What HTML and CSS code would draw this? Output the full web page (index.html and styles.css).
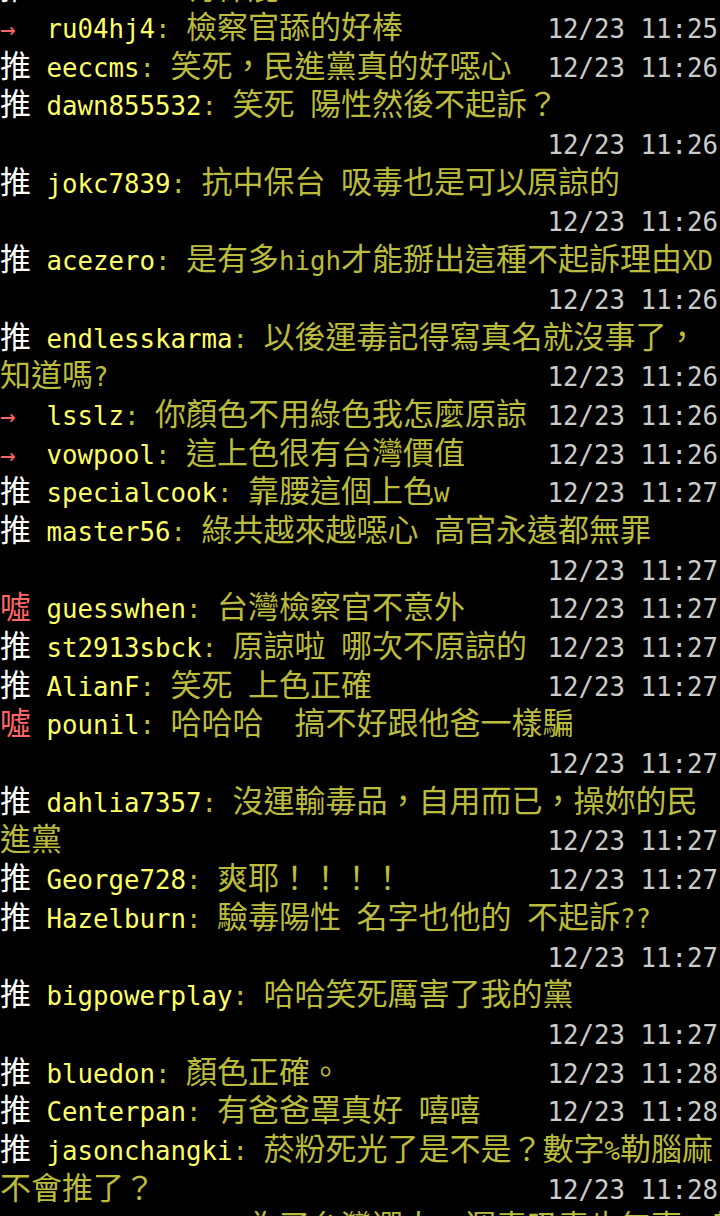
FILE: index.html
```html
<!DOCTYPE html>
<html lang="zh-Hant">
<head>
    <meta charset="UTF-8">
    <title>PTT 推文</title>
    <link rel="stylesheet" href="styles.css">
</head>
<body>

<div class="scr">
<div class="ln"><span class="l"><span class="mk c">推</span> <span class="id">wenhsin</span><span class="tx">: <span class="c">有保庇</span></span></span></div>
<div class="ln"><span class="l"><span class="mk boo">→</span> <span class="id">ru04hj4</span><span class="tx">: <span class="c">檢察官舔的好棒</span></span></span><span class="tm">12/23 11:25</span></div>
<div class="ln"><span class="l"><span class="mk c">推</span> <span class="id">eeccms</span><span class="tx">: <span class="c">笑死，民進黨真的好噁心</span></span></span><span class="tm">12/23 11:26</span></div>
<div class="ln"><span class="l"><span class="mk c">推</span> <span class="id">dawn855532</span><span class="tx">: <span class="c">笑死</span> <span class="c">陽性然後不起訴？</span></span></span></div>
<div class="ln"><span class="l"></span><span class="tm">12/23 11:26</span></div>
<div class="ln"><span class="l"><span class="mk c">推</span> <span class="id">jokc7839</span><span class="tx">: <span class="c">抗中保台</span> <span class="c">吸毒也是可以原諒的</span></span></span></div>
<div class="ln"><span class="l"></span><span class="tm">12/23 11:26</span></div>
<div class="ln"><span class="l"><span class="mk c">推</span> <span class="id">acezero</span><span class="tx">: <span class="c">是有多</span>high<span class="c">才能掰出這種不起訴理由</span>XD</span></span></div>
<div class="ln"><span class="l"></span><span class="tm">12/23 11:26</span></div>
<div class="ln"><span class="l"><span class="mk c">推</span> <span class="id">endlesskarma</span><span class="tx">: <span class="c">以後運毒記得寫真名就沒事了，</span></span></span></div>
<div class="ln"><span class="l"><span class="tx"><span class="c">知道嗎</span>?</span></span><span class="tm">12/23 11:26</span></div>
<div class="ln"><span class="l"><span class="mk boo">→</span> <span class="id">lsslz</span><span class="tx">: <span class="c">你顏色不用綠色我怎麼原諒</span></span></span><span class="tm">12/23 11:26</span></div>
<div class="ln"><span class="l"><span class="mk boo">→</span> <span class="id">vowpool</span><span class="tx">: <span class="c">這上色很有台灣價值</span></span></span><span class="tm">12/23 11:26</span></div>
<div class="ln"><span class="l"><span class="mk c">推</span> <span class="id">specialcook</span><span class="tx">: <span class="c">靠腰這個上色</span>w</span></span><span class="tm">12/23 11:27</span></div>
<div class="ln"><span class="l"><span class="mk c">推</span> <span class="id">master56</span><span class="tx">: <span class="c">綠共越來越噁心</span> <span class="c">高官永遠都無罪</span></span></span></div>
<div class="ln"><span class="l"></span><span class="tm">12/23 11:27</span></div>
<div class="ln"><span class="l"><span class="mk c boo">噓</span> <span class="id">guesswhen</span><span class="tx">: <span class="c">台灣檢察官不意外</span></span></span><span class="tm">12/23 11:27</span></div>
<div class="ln"><span class="l"><span class="mk c">推</span> <span class="id">st2913sbck</span><span class="tx">: <span class="c">原諒啦</span> <span class="c">哪次不原諒的</span></span></span><span class="tm">12/23 11:27</span></div>
<div class="ln"><span class="l"><span class="mk c">推</span> <span class="id">AlianF</span><span class="tx">: <span class="c">笑死</span> <span class="c">上色正確</span></span></span><span class="tm">12/23 11:27</span></div>
<div class="ln"><span class="l"><span class="mk c boo">噓</span> <span class="id">pounil</span><span class="tx">: <span class="c">哈哈哈</span>  <span class="c">搞不好跟他爸一樣騙</span></span></span></div>
<div class="ln"><span class="l"></span><span class="tm">12/23 11:27</span></div>
<div class="ln"><span class="l"><span class="mk c">推</span> <span class="id">dahlia7357</span><span class="tx">: <span class="c">沒運輸毒品，自用而已，操妳的民</span></span></span></div>
<div class="ln"><span class="l"><span class="tx"><span class="c">進黨</span></span></span><span class="tm">12/23 11:27</span></div>
<div class="ln"><span class="l"><span class="mk c">推</span> <span class="id">George728</span><span class="tx">: <span class="c">爽耶！！！！</span></span></span><span class="tm">12/23 11:27</span></div>
<div class="ln"><span class="l"><span class="mk c">推</span> <span class="id">Hazelburn</span><span class="tx">: <span class="c">驗毒陽性</span> <span class="c">名字也他的</span> <span class="c">不起訴</span>??</span></span></div>
<div class="ln"><span class="l"></span><span class="tm">12/23 11:27</span></div>
<div class="ln"><span class="l"><span class="mk c">推</span> <span class="id">bigpowerplay</span><span class="tx">: <span class="c">哈哈笑死厲害了我的黨</span></span></span></div>
<div class="ln"><span class="l"></span><span class="tm">12/23 11:27</span></div>
<div class="ln"><span class="l"><span class="mk c">推</span> <span class="id">bluedon</span><span class="tx">: <span class="c">顏色正確。</span></span></span><span class="tm">12/23 11:28</span></div>
<div class="ln"><span class="l"><span class="mk c">推</span> <span class="id">Centerpan</span><span class="tx">: <span class="c">有爸爸罩真好</span> <span class="c">嘻嘻</span></span></span><span class="tm">12/23 11:28</span></div>
<div class="ln"><span class="l"><span class="mk c">推</span> <span class="id">jasonchangki</span><span class="tx">: <span class="c">菸粉死光了是不是？數字</span>%<span class="c">勒腦麻</span></span></span></div>
<div class="ln"><span class="l"><span class="tx"><span class="c">不會推了？</span></span></span><span class="tm">12/23 11:28</span></div>
<div class="ln"><span class="l"><span class="mk boo">→</span> <span class="id">snowcoverer</span><span class="tx">: <span class="c">為了台灣選人，運毒吸毒也無事，輸</span></span></span></div>
</div>

</body>
</html>
```

FILE: styles.css
```css
* {
    margin: 0;
    padding: 0;
}

html, body {
    background: #000;
    height: 100%;
    overflow: hidden;
}

.scr {
    margin-top: -28.65px;
    font-family: "DejaVu Sans Mono", "Noto Sans CJK TC", monospace;
    font-size: 25.75px;
    color: #fff;
}

.ln {
    display: flex;
    height: 38.7px;
    line-height: 38.7px;
    white-space: pre;
    padding-right: 2px;
}

.l {
    flex: 1;
}

/* cjk runs take two mono cells */
.c {
    font-family: "Noto Sans CJK TC", sans-serif;
    font-size: 31px;
    line-height: 20px;
}

.mk {
    display: inline-block;
    width: 31px;
    color: #fff;
}

.boo {
    color: #ff6666;
}

.id {
    color: #ffff66;
}

.tx {
    color: #bcbc3c;
}

.tm {
    color: #cccccc;
}
```
